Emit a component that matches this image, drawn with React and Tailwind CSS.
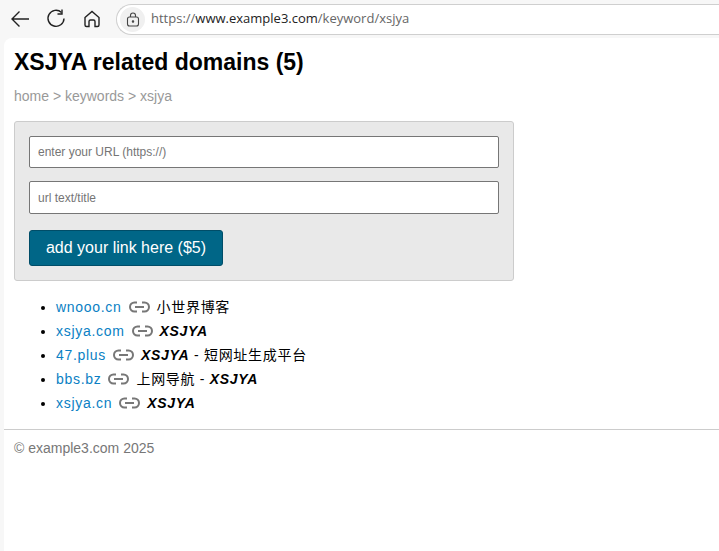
import React from "react";

const links = [
  { domain: "wnooo.cn", title: <span>小世界博客</span> },
  { domain: "xsjya.com", title: <b className="italic">XSJYA</b> },
  { domain: "47.plus", title: <><b className="italic">XSJYA</b> - 短网址生成平台</> },
  { domain: "bbs.bz", title: <>上网导航 - <b className="italic">XSJYA</b></> },
  { domain: "xsjya.cn", title: <b className="italic">XSJYA</b> },
];

const LinkIcon = () => (
  <svg width="21" height="12" viewBox="0 0 21 12" fill="none" stroke="#777" strokeWidth="2" className="mx-[7px] inline-block align-[-1px]">
    <path d="M8 1.5H5.5a4.5 4.5 0 0 0 0 9H8" />
    <path d="M13 1.5h2.5a4.5 4.5 0 0 1 0 9H13" />
    <path d="M6 6h9" />
  </svg>
);

const App = () => {
  return (
    <div className="h-[551px] w-[719px] overflow-hidden bg-[#f7f7f7] font-['Liberation_Sans',sans-serif]">
      {/* browser toolbar */}
      <div className="flex h-[38px] items-center">
        <svg width="20" height="20" viewBox="0 0 20 20" fill="none" stroke="#222" strokeWidth="1.4" className="ml-[10px]">
          <path d="M19 10H2M9.5 2.5 2 10l7.5 7.5" />
        </svg>
        <svg width="20" height="20" viewBox="0 0 20 20" fill="none" stroke="#222" strokeWidth="1.4" className="ml-[16px]">
          <path d="M15.5 3.5a8 8 0 1 0 2.5 6" />
          <path d="M16 0.5v4.5h-4.5" />
        </svg>
        <svg width="18" height="18" viewBox="0 0 18 18" fill="none" stroke="#222" strokeWidth="1.4" className="ml-[17px]">
          <path d="M2 7.5 9 1.5l7 6V15a1.5 1.5 0 0 1-1.5 1.5H12v-5a1.5 1.5 0 0 0-1.5-1.5h-3A1.5 1.5 0 0 0 6 11.500v5H3.500A1.500 1.500 0 0 1 2 15z" />
        </svg>
        <div className="ml-[15px] flex h-[31px] flex-1 items-center rounded-l-full border border-r-0 border-[#cfcfcf] bg-white pl-[3px]">
          <div className="flex h-[25px] w-[25px] items-center justify-center rounded-full bg-[#f0f0f0]">
            <svg width="14" height="15" viewBox="0 0 14 15" fill="none" stroke="#444" strokeWidth="1.1">
              <rect x="1.500" y="5" width="11" height="9" rx="2" />
              <path d="M4.500 5V3.500a2.500 2.500 0 0 1 5 0V5" />
              <circle cx="7" cy="9.500" r="0.700" fill="#444" />
            </svg>
          </div>
          <span className="ml-[6px] font-['Open_Sans',sans-serif] text-[13px] text-[#666]">
            https://<span className="text-[#222]">www.example3.com</span>/keyword/xsjya
          </span>
        </div>
      </div>

      {/* page */}
      <div className="ml-[4px] h-[513px] rounded-tl-lg bg-white">
        <div className="pl-[10px]">
          <h1 className="pt-[11px] text-[23px] leading-[27px] font-bold text-black">XSJYA related domains (5)</h1>
          <div className="mt-[12px] text-sm leading-4 text-[#999]">home &gt; keywords &gt; xsjya</div>

          <form className="mt-[17px] w-[500px] rounded-[3px] border border-[#ccc] bg-[#e9e9e9] pt-[14px] pr-[14px] pb-[14px] pl-[14px]">
            <input
              placeholder="enter your URL (https://)"
              className="block h-[32px] w-full rounded-[2px] border border-[#767676] bg-white px-2 text-xs placeholder:text-[#757575]"
            />
            <input
              placeholder="url text/title"
              className="mt-[13px] block h-[33px] w-full rounded-[2px] border border-[#767676] bg-white px-2 text-xs placeholder:text-[#757575]"
            />
            <button
              type="button"
              className="mt-[16px] block h-[36px] w-[194px] rounded-[3px] border border-[#004d68] bg-[#006687] text-center text-base text-white"
            >
              add your link here ($5)
            </button>
          </form>

          <ul className="mt-[14px] list-disc pl-[42px] font-['Liberation_Sans','Noto_Sans_CJK_SC',sans-serif] text-sm leading-6 tracking-[0.7px] text-black">
            {links.map((link) => (
              <li key={link.domain}>
                <a href="#" className="text-[#0a7fc4]">{link.domain}</a>
                <LinkIcon />
                {link.title}
              </li>
            ))}
          </ul>
        </div>

        <footer className="mt-[14px] border-t border-[#ccc] pt-[10px] pl-[10px] text-sm leading-4 text-[#777]">
          © example3.com 2025
        </footer>
      </div>
    </div>
  );
};

export default App;
